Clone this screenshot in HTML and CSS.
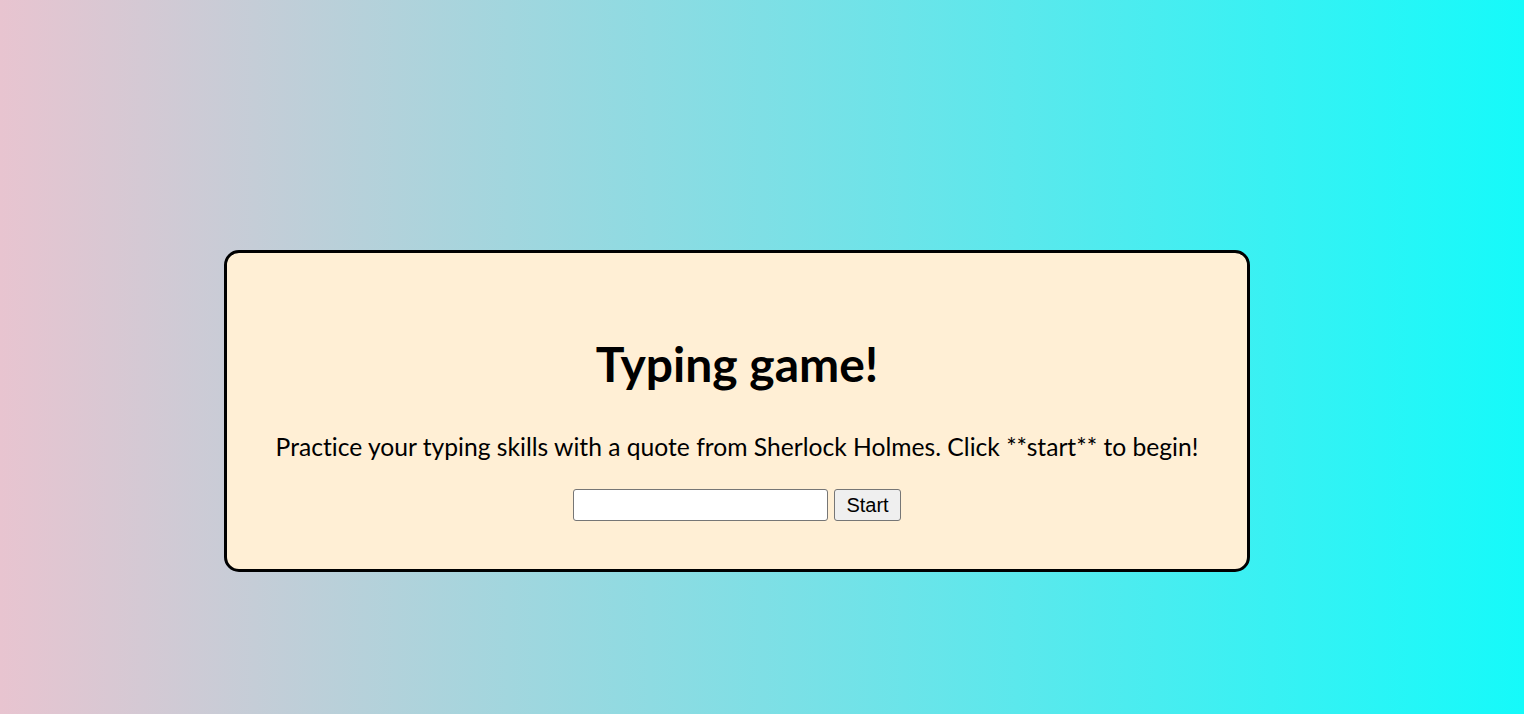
FILE: index.html
```html
<!DOCTYPE html>
<html lang="en">
<head>
<meta charset="utf-8">
<title>Typing game</title>
<link rel="stylesheet" href="styles.css">
</head>
<body>
<main class="card">
  <h1 class="title">Typing game!</h1>
  <p class="intro">Practice your typing skills with a quote from Sherlock Holmes. Click **start** to begin!</p>
  <div class="controls">
    <input class="typed" type="text" aria-label="typed value">
    <button class="start" type="button">Start</button>
  </div>
</main>
</body>
</html>
```

FILE: styles.css
```css
html, body {
  margin: 0;
  height: 100%;
}
body {
  background: linear-gradient(to right, #e8c4d0, #15fafa);
  font-family: Lato, "Noto Sans", sans-serif;
  font-variant-ligatures: none;
  padding: 250px 0 0 224px;
  box-sizing: border-box;
}
.card {
  box-sizing: border-box;
  width: 1026px;
  height: 322px;
  background: #ffefd5;
  border: 3px solid #000;
  border-radius: 15px;
  display: flex;
  flex-direction: column;
  align-items: center;
  padding-top: 82px;
}
.title {
  margin: 0;
  font-size: 48px;
  line-height: 58px;
  font-weight: 700;
  color: #000;
}
.intro {
  margin: 39px 0 0;
  font-size: 24.65px;
  line-height: 30px;
  color: #000;
}
.controls {
  display: flex;
  gap: 6px;
  margin-top: 27px;
}
.typed {
  box-sizing: border-box;
  width: 255px;
  height: 32px;
  font-size: 20px;
  border: 1px solid #767676;
  border-radius: 3px;
  background: #fff;
  padding: 1px 2px;
}
.start {
  box-sizing: border-box;
  width: 67px;
  height: 32px;
  font-family: "Liberation Sans", Arial, sans-serif;
  font-size: 20px;
  color: #000;
  background: #efefef;
  border: 1px solid #767676;
  border-radius: 3px;
  padding: 1px 6px;
}
```
